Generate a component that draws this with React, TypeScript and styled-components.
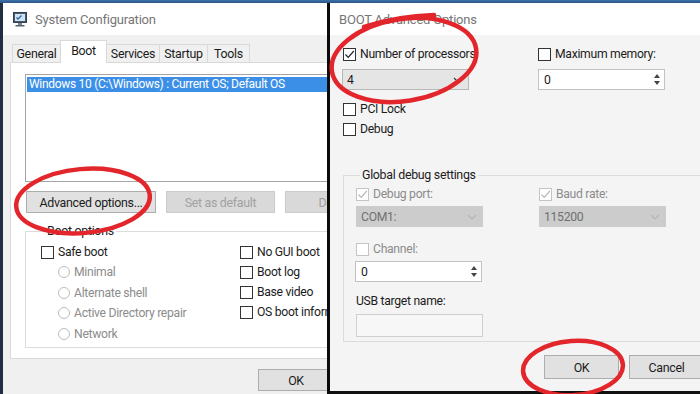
import React from 'react';
import styled, { createGlobalStyle } from 'styled-components';

const pallette = {
  face: '#f0f0f0',
  faceLight: '#f4f4f4',
  white: '#ffffff',
  text: '#1c1c1c',
  title: '#767676',
  disabled: '#a2a2a2',
  border: '#adadad',
  line: '#dcdcdc',
  highlight: '#3b8fe7',
  red: '#e2262b',
};

const GlobalStyle = createGlobalStyle`
  html, body {
    margin: 0;
    padding: 0;
    background: #203a57;
  }
  body {
    font-family: Roboto, 'Noto Sans', sans-serif;
    font-size: 11.8px;
    letter-spacing: -0.3px;
    color: ${pallette.text};
  }
  * { box-sizing: border-box; }
`;

const Screen = styled.div`
  position: relative;
  width: 700px;
  height: 394px;
  display: flex;
  padding: 3px 0 0 3px;
  background: linear-gradient(180deg, #3d72aa 0px, #2b5583 3px, #1f2e40 3px);
  overflow: hidden;
`;

const LeftPane = styled.div`
  width: 324px;
  overflow: hidden;
  display: flex;
  flex-direction: column;
  background: ${pallette.face};
`;

const Divider = styled.div`
  width: 3px;
  background: #0b0b0b;
`;

const RightPane = styled.div`
  flex: 1;
  overflow: hidden;
  display: flex;
  flex-direction: column;
  background: ${pallette.faceLight};
  border-bottom: 3px solid #111;
`;

const TitleBar = styled.div<{ $pad: number }>`
  height: 32px;
  flex: none;
  display: flex;
  align-items: center;
  gap: 8px;
  padding-left: ${(p) => p.$pad}px;
  background: ${pallette.white};
  width: 400px;
`;

const TitleText = styled.span`
  font-size: 13px;
  letter-spacing: -0.2px;
  color: ${pallette.title};
  flex: 1;
`;

const CloseGlyph = styled.span`
  font-size: 15px;
  color: #5a5a5a;
  width: 24px;
  margin-right: 10px;
  text-align: center;
`;

const LeftBody = styled.div`
  flex: 1;
  width: 420px;
  padding: 6px 0 0 7px;
  display: flex;
  flex-direction: column;
`;

const TabStrip = styled.div`
  display: flex;
  align-items: flex-end;
  height: 22px;
  margin-left: 3px;
  margin-bottom: -1px;
  position: relative;
  z-index: 1;
`;

const Tab = styled.div<{ $w: number; $selected?: boolean }>`
  width: ${(p) => p.$w}px;
  height: ${(p) => (p.$selected ? 23 : 19)}px;
  border: 1px solid #d9d9d9;
  border-bottom: ${(p) => (p.$selected ? 'none' : '1px solid #d9d9d9')};
  margin-left: -1px;
  background: ${(p) => (p.$selected ? pallette.white : '#f0f0f0')};
  display: flex;
  align-items: ${(p) => (p.$selected ? 'flex-start' : 'center')};
  padding-top: ${(p) => (p.$selected ? 2 : 0)}px;
  justify-content: center;
  font-size: 12.4px;
`;

const TabPanel = styled.div`
  height: 297px;
  border: 1px solid #d9d9d9;
  background: ${pallette.white};
  padding: 11px 0 0 14px;
`;

const ListBox = styled.div`
  height: 108px;
  border: 1px solid #a5a5a5;
  padding: 2px 0 0 1px;
  background: ${pallette.white};
`;

const ListRow = styled.div`
  height: 15px;
  line-height: 15px;
  background: ${pallette.highlight};
  color: ${pallette.white};
  padding-left: 2px;
  font-size: 12px;
`;

const ButtonRow = styled.div`
  display: flex;
  gap: 10px;
  margin-top: 9px;
  padding-left: 1px;
`;

const PushButton = styled.div<{ $w: number; $h?: number; $disabled?: boolean }>`
  width: ${(p) => p.$w}px;
  height: ${(p) => p.$h ?? 22}px;
  flex: none;
  border: 1px solid ${(p) => (p.$disabled ? '#cbcbcb' : pallette.border)};
  background: ${(p) => (p.$disabled ? '#d9d9d9' : '#e1e1e1')};
  color: ${(p) => (p.$disabled ? pallette.disabled : pallette.text)};
  display: flex;
  align-items: center;
  justify-content: center;
  font-size: 12.4px;
`;

const GroupBox = styled.fieldset<{ $h: number; $pad: string }>`
  margin: 0;
  height: ${(p) => p.$h}px;
  border: 1px solid ${pallette.line};
  padding: ${(p) => p.$pad};
  min-width: 0;
`;

const Legend = styled.legend`
  padding: 0 2px;
  margin-left: 4px;
  line-height: 14px;
  font-size: 12.4px;
`;

const BootGroup = styled(GroupBox)`
  margin-top: 11px;
  width: 420px;
  display: grid;
  grid-template-columns: 199px 1fr;
  align-content: start;
`;

const Column = styled.div`
  display: flex;
  flex-direction: column;
`;

const OptionRow = styled.div<{ $indent?: number; $h?: number }>`
  height: ${(p) => p.$h ?? 20}px;
  display: flex;
  align-items: center;
  padding-left: ${(p) => p.$indent ?? 0}px;
  gap: 4px;
  white-space: nowrap;
  font-size: 12.2px;
`;

const OptionText = styled.span<{ $disabled?: boolean }>`
  color: ${(p) => (p.$disabled ? '#8c8c8c' : pallette.text)};
`;

const Box = styled.span<{ $disabled?: boolean }>`
  width: 13px;
  height: 13px;
  flex: none;
  border: 1px solid ${(p) => (p.$disabled ? '#c4c4c4' : '#333')};
  background: ${pallette.white};
  display: flex;
  align-items: center;
  justify-content: center;
`;

const Radio = styled.span`
  width: 12px;
  height: 12px;
  flex: none;
  border-radius: 50%;
  border: 1px solid #bdbdbd;
  background: ${pallette.white};
`;

const Footer = styled.div<{ $pad: number; $top: number }>`
  display: flex;
  gap: 10px;
  margin-top: ${(p) => p.$top}px;
  padding-left: ${(p) => p.$pad}px;
`;

const RightBody = styled.div`
  flex: 1;
  width: 400px;
  padding: 12px 0 0 13px;
  display: flex;
  flex-direction: column;
`;

const FieldGrid = styled.div<{ $col: number }>`
  display: grid;
  grid-template-columns: ${(p) => p.$col}px 1fr;
`;

const Field = styled.div<{ $gap?: number; $top?: number }>`
  display: flex;
  flex-direction: column;
  gap: ${(p) => p.$gap ?? 8}px;
  margin-top: ${(p) => p.$top ?? 0}px;
`;

const Select = styled.div<{ $disabled?: boolean; $shift?: number }>`
  width: 127px;
  height: 21px;
  margin-left: ${(p) => p.$shift ?? 0}px;
  border: 1px solid ${(p) => (p.$disabled ? '#cccccc' : '#b8b8b8')};
  background: ${(p) => (p.$disabled ? '#cccccc' : '#e5e5e5')};
  color: ${(p) => (p.$disabled ? '#707070' : pallette.text)};
  display: flex;
  align-items: center;
  justify-content: space-between;
  padding: 0 5px 0 4px;
  font-size: 12.2px;
`;

const SpinBox = styled.div<{ $shift?: number }>`
  width: 127px;
  height: 21px;
  margin-left: ${(p) => p.$shift ?? 0}px;
  border: 1px solid #c2c2c2;
  background: ${pallette.white};
  display: flex;
  align-items: center;
  justify-content: space-between;
  padding-left: 5px;
  font-size: 12.2px;
`;

const SpinArrows = styled.span`
  width: 14px;
  height: 100%;
  display: flex;
  flex-direction: column;
  align-items: center;
  justify-content: center;
  gap: 3px;
`;

const TextInput = styled.div`
  width: 127px;
  height: 23px;
  border: 1px solid #cfcfcf;
  background: #f7f7f7;
`;

const Label = styled.div`
  line-height: 15px;
  font-size: 12.2px;
`;

const DebugGroup = styled(GroupBox)`
  margin-top: 32px;
  width: 400px;
`;

const Overlay = styled.svg`
  position: absolute;
  inset: 0;
  pointer-events: none;
`;

const MonitorIcon = () => (
  <svg width="14" height="15" viewBox="0 0 14 15">
    <rect x="0.5" y="0.5" width="13" height="10" fill="#4a5a70" stroke="#34404f" />
    <rect x="2" y="2" width="10" height="7" fill="#cfe3f3" />
    <path d="M3.5 5.5 l1.5 1.5 3.5 -3.5" stroke="#2a63a8" strokeWidth="1.3" fill="none" />
    <rect x="5" y="11" width="4" height="2" fill="#7b8797" />
    <rect x="2.5" y="13" width="9" height="1.5" fill="#56606d" />
  </svg>
);

const Check = ({ disabled }: { disabled?: boolean }) => (
  <svg width="11" height="11" viewBox="0 0 11 11">
    <path
      d="M1.5 5.5 L4.2 8.3 L9.8 2"
      stroke={disabled ? '#b9b9b9' : '#222'}
      strokeWidth="1.2"
      fill="none"
    />
  </svg>
);

const Chevron = ({ color }: { color: string }) => (
  <svg width="10" height="6" viewBox="0 0 10 6">
    <path d="M1 1 L5 5 L9 1" stroke={color} strokeWidth="1.1" fill="none" />
  </svg>
);

const Spinner = () => (
  <SpinArrows>
    <svg width="6" height="4" viewBox="0 0 6 4">
      <path d="M0 4 L3 0 L6 4 Z" fill="#444" />
    </svg>
    <svg width="6" height="4" viewBox="0 0 6 4">
      <path d="M0 0 L3 4 L6 0 Z" fill="#444" />
    </svg>
  </SpinArrows>
);

type CheckProps = { label: string; checked?: boolean; disabled?: boolean; h?: number };

const CheckOption = ({ label, checked, disabled, h }: CheckProps) => (
  <OptionRow $h={h}>
    <Box $disabled={disabled}>{checked && <Check disabled={disabled} />}</Box>
    <OptionText $disabled={disabled}>{label}</OptionText>
  </OptionRow>
);

const RadioOption = ({ label }: { label: string }) => (
  <OptionRow $indent={17} $h={20.5}>
    <Radio />
    <OptionText $disabled>{label}</OptionText>
  </OptionRow>
);

const tabs = [
  { name: 'General', w: 49 },
  { name: 'Boot', w: 47, selected: true },
  { name: 'Services', w: 54 },
  { name: 'Startup', w: 49 },
  { name: 'Tools', w: 43 },
];

const SystemConfiguration = () => (
  <LeftPane>
    <TitleBar $pad={10}>
      <MonitorIcon />
      <TitleText>System Configuration</TitleText>
    </TitleBar>
    <LeftBody>
      <TabStrip>
        {tabs.map((t) => (
          <Tab key={t.name} $w={t.w} $selected={t.selected}>
            {t.name}
          </Tab>
        ))}
      </TabStrip>
      <TabPanel>
        <ListBox>
          <ListRow>Windows 10 (C:\Windows) : Current OS; Default OS</ListRow>
        </ListBox>
        <ButtonRow>
          <PushButton $w={130}>Advanced options...</PushButton>
          <PushButton $w={109} $disabled>
            Set as default
          </PushButton>
          <PushButton $w={100} $disabled>
            Delete
          </PushButton>
        </ButtonRow>
        <BootGroup $h={124} $pad="4px 0 0 15px">
          <Legend>Boot options</Legend>
          <Column>
            <CheckOption label="Safe boot" />
            <RadioOption label="Minimal" />
            <RadioOption label="Alternate shell" />
            <RadioOption label="Active Directory repair" />
            <RadioOption label="Network" />
          </Column>
          <Column>
            <CheckOption label="No GUI boot" />
            <CheckOption label="Boot log" />
            <CheckOption label="Base video" />
            <CheckOption label="OS boot information" />
          </Column>
        </BootGroup>
      </TabPanel>
      <Footer $pad={248} $top={10}>
        <PushButton $w={76}>OK</PushButton>
      </Footer>
    </LeftBody>
  </LeftPane>
);

const AdvancedOptions = () => (
  <RightPane>
    <TitleBar $pad={9}>
      <TitleText>BOOT Advanced Options</TitleText>
      <CloseGlyph>✕</CloseGlyph>
    </TitleBar>
    <RightBody>
      <FieldGrid $col={195}>
        <Field>
          <CheckOption label="Number of processors:" checked h={14} />
          <Select $shift={-1}>
            4
            <Chevron color="#333" />
          </Select>
        </Field>
        <Field>
          <CheckOption label="Maximum memory:" h={14} />
          <SpinBox>
            0
            <Spinner />
          </SpinBox>
        </Field>
      </FieldGrid>
      <Field $gap={6} $top={12}>
        <CheckOption label="PCI Lock" h={14} />
        <CheckOption label="Debug" h={14} />
      </Field>
      <DebugGroup $h={174} $pad="5px 0 0 12px">
        <Legend>Global debug settings</Legend>
        <FieldGrid $col={183}>
          <Field $gap={5}>
            <CheckOption label="Debug port:" checked disabled h={14} />
            <Select $disabled>
              COM1:
              <Chevron color="#b5b5b5" />
            </Select>
          </Field>
          <Field $gap={5}>
            <CheckOption label="Baud rate:" checked disabled h={14} />
            <Select $disabled>
              115200
              <Chevron color="#b5b5b5" />
            </Select>
          </Field>
        </FieldGrid>
        <Field $gap={5} $top={15}>
          <CheckOption label="Channel:" disabled h={14} />
          <SpinBox $shift={-1}>
            0
            <Spinner />
          </SpinBox>
        </Field>
        <Field $gap={5} $top={12}>
          <Label>USB target name:</Label>
          <TextInput />
        </Field>
      </DebugGroup>
      <Footer $pad={201} $top={13}>
        <PushButton $w={75} $h={24}>
          OK
        </PushButton>
        <PushButton $w={75} $h={24}>
          Cancel
        </PushButton>
      </Footer>
    </RightBody>
  </RightPane>
);

const App = () => (
  <>
    <GlobalStyle />
    <Screen>
      <SystemConfiguration />
      <Divider />
      <AdvancedOptions />
      <Overlay width="700" height="394" viewBox="0 0 700 394">
        <g fill="none" stroke={pallette.red} strokeWidth="4.5" strokeLinecap="round">
          <ellipse cx="83" cy="201" rx="67" ry="32" transform="rotate(-5 83 201)" />
          <ellipse cx="404" cy="60" rx="73" ry="41" transform="rotate(-9 404 60)" />
          <path d="M434 15 Q398 16 364 27" />
          <ellipse cx="573" cy="368" rx="50" ry="27" transform="rotate(-4 573 368)" />
        </g>
      </Overlay>
    </Screen>
  </>
);

export default App;
